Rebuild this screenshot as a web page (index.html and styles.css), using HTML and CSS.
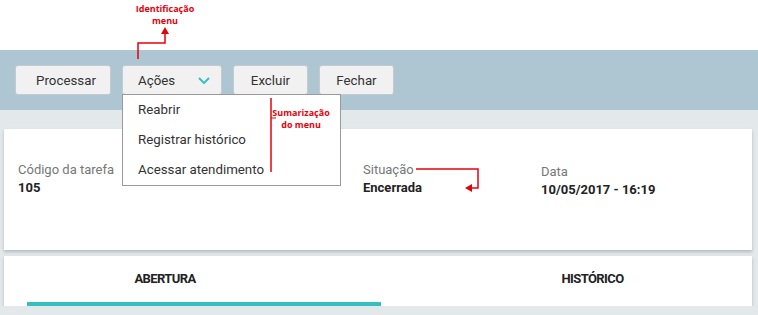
FILE: index.html
```html
<!DOCTYPE HTML><html>
<head>
  <title>Tarefa</title>
  <meta name="viewport" content="width=device-width, initial-scale=1">
  <link rel="stylesheet" href="styles.css">
</head>
<body>
  <div class="top"></div>
  <div class="toolbar">
    <button class="button button_proc">Processar</button>
    <div class="dropdown">
      <button class="button button_menu">Ações
        <svg class="chevron" width="12" height="7" viewBox="0 0 12 7"><path d="M1 1 L6 6 L11 1" fill="none" stroke="#3bbfc4" stroke-width="2"/></svg>
      </button>
      <div class="menu">
        <div class="menu_item">Reabrir</div>
        <div class="menu_item">Registrar histórico</div>
        <div class="menu_item">Acessar atendimento</div>
      </div>
    </div>
    <button class="button button_small">Excluir</button>
    <button class="button button_small">Fechar</button>
  </div>
  <div class="content">
    <div class="card info">
      <div class="field field_code">
        <p class="label">Código da tarefa</p>
        <p class="value">105</p>
      </div>
      <div class="field field_sit">
        <p class="label">Situação</p>
        <p class="value">Encerrada</p>
      </div>
      <div class="field field_data">
        <p class="label">Data</p>
        <p class="value">10/05/2017 - 16:19</p>
      </div>
    </div>
    <div class="card tabs">
      <div class="tab tab_active">ABERTURA</div>
      <div class="tab tab_second">HISTÓRICO</div>
    </div>
  </div>

  <!-- anotações -->
  <div class="note note_ident">Identificação<br>menu</div>
  <div class="note note_sum">Sumarização<br>do menu</div>
  <svg class="notes" width="758" height="315">
    <polyline points="138,59 138,43 165,43 165,33" fill="none" stroke="#e8000b" stroke-width="1.5"/>
    <polygon points="165,27 161,34 169,34" fill="#e8000b"/>
    <line x1="271" y1="98" x2="271" y2="172" stroke="#e8000b" stroke-width="1.5"/>
    <line x1="271" y1="118" x2="276" y2="118" stroke="#e8000b" stroke-width="1"/>
    <polyline points="416,169 478,169 478,188 471,188" fill="none" stroke="#e8000b" stroke-width="1.5"/>
    <polygon points="465,188 472,184 472,192" fill="#e8000b"/>
  </svg>
</body>
</html>
```
FILE: styles.css
```css
html {
  font-family: Roboto, "Liberation Sans", sans-serif;
}
body {
  margin: 0;
  background-color: #e3e8eb;
  color: #333;
  position: relative;
}
p {
  margin: 0;
}
.top {
  height: 50px;
  background-color: #fff;
}
.toolbar {
  height: 60px;
  box-sizing: border-box;
  padding: 15px 15px 0 15px;
  background-color: #aec5d2;
  display: flex;
  align-items: flex-start;
  gap: 11px;
}
.button {
  height: 30px;
  padding: 0;
  font-family: Roboto, "Liberation Sans", sans-serif;
  font-size: 13.3px;
  color: #333;
  background-color: #f1f1f1;
  border: 1px solid #c3cbd0;
  border-radius: 3px;
  outline: none;
  text-align: center;
}
.button_proc {
  width: 96px;
  padding-left: 6px;
}
.button_small {
  width: 75px;
}
.button_menu {
  width: 100px;
  padding: 0 0 0 15px;
  display: flex;
  align-items: center;
  justify-content: space-between;
}
.chevron {
  margin-right: 11px;
}
.dropdown {
  position: relative;
}
.menu {
  position: absolute;
  top: 29px;
  left: 0;
  width: 217px;
  background-color: #fff;
  border: 1px solid #9a9a9a;
  z-index: 2;
}
.menu_item {
  height: 30px;
  line-height: 30px;
  padding-left: 15px;
  font-size: 13.3px;
  color: #333;
}
.content {
  padding: 19px 6px 0 4px;
}
.card {
  background-color: #fff;
  box-shadow: 0 2px 3px rgba(120,130,135,.45);
}
.info {
  height: 121px;
  box-sizing: border-box;
  padding: 33px 14px 0 14px;
  display: flex;
}
.field {
  flex-shrink: 0;
}
.field_code {
  width: 345px;
}
.field_sit {
  width: 178px;
}
.field_data {
  padding-top: 2px;
}
.label {
  font-size: 13px;
  color: #777;
  line-height: 16px;
}
.value {
  margin-top: 1px;
  font-size: 13px;
  font-weight: bold;
  color: #222;
  line-height: 18px;
}
.tabs {
  margin-top: 6px;
  height: 50px;
  display: flex;
  padding-left: 23px;
}
.tab {
  display: flex;
  align-items: center;
  justify-content: center;
  font-size: 13px;
  font-weight: bold;
  letter-spacing: -0.6px;
  color: #222;
  padding-bottom: 2px;
}
.tab_active {
  width: 354px;
  box-sizing: border-box;
  padding-right: 78px;
  border-bottom: 4px solid #36bfc1;
}
.tab_second {
  flex: 1;
  padding-left: 52px;
  border-bottom: 4px solid transparent;
}
.notes {
  position: absolute;
  top: 0;
  left: 0;
  z-index: 3;
}
.note {
  position: absolute;
  font-family: "Open Sans", sans-serif;
  font-size: 9px;
  font-weight: bold;
  line-height: 12px;
  color: #e8000b;
  text-align: center;
  z-index: 3;
}
.note_ident {
  top: 3px;
  left: 135px;
  width: 60px;
}
.note_sum {
  top: 107px;
  left: 272px;
  width: 58px;
}
```
